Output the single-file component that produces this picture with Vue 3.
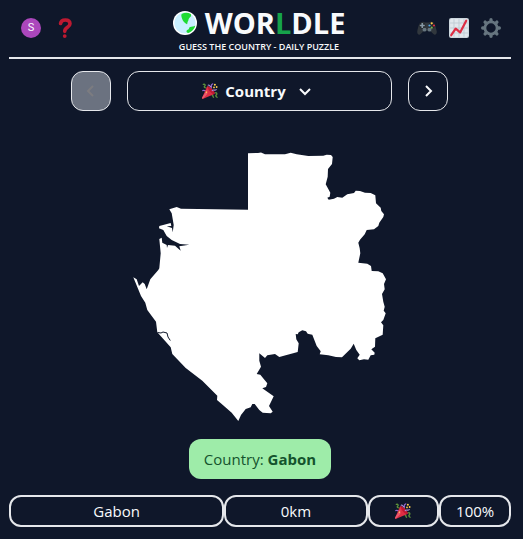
<script setup>
import { ref } from 'vue'

const guess = ref({ name: 'Gabon', distance: '0km', percent: '100%' })
</script>

<template>
  <svg class="defs" aria-hidden="true">
    <symbol id="party" viewBox="0 0 36 36">
      <path fill="none" stroke="#9266cc" stroke-width="3" stroke-linecap="round" d="M19 13c4-3 1-6 2-8s2-2 3-3M2 17c3-2 5 2 8 0" />
      <path fill="none" stroke="#5c913b" stroke-width="3" stroke-linecap="round" d="M3 3c4-1 5 2 3 4s0 4 3 4M30 22c4-1 4 3 2 5s0 4 2 5M23 27c2 0 1 4 3 5" />
      <path fill="#dd2e44" d="M11.600 7.600c-.2.100-.3.300-.4.600L.2 33c-.7 1.700.2 3.100 2.500 2.600L28 24.500c1-.5.800-2.800-.8-5.500-3.700-6.200-12.500-13.500-15.600-11.400z" />
      <path fill="#ea596e" d="M12 14 .7 31.800.2 33c-.4 1.300.2 2.600 1.800 2.700L12 25z" />
      <path fill="#be1931" d="M21 13c5 4 8 9 7 11.500-1 1.400-6-1.500-9.500-5S12 9 13.500 8.200C15 7.500 18 10 21 13z" />
      <path fill="none" stroke="#aa8dd8" stroke-width="2.500" stroke-linecap="round" d="M14 5c3-2 3 4 6 3M23 17c3-3 6 1 9-2" />
      <g fill="#ffcc4d">
        <circle cx="29" cy="4" r="2.200" /><circle cx="33" cy="9" r="2" />
        <circle cx="27" cy="10" r="2" /><circle cx="10" cy="21" r="1.700" />
      </g>
    </symbol>
  </svg>

  <div class="page">
    <header class="header">
      <nav class="tools left">
        <button class="avatar" type="button" aria-label="Account">S</button>
        <button class="tool" type="button" aria-label="How to play">
          <svg viewBox="0 0 36 36">
            <path fill="none" stroke="#be1931" stroke-width="6.500" stroke-linecap="round" d="M10 10c.5-4 4-6.500 8.500-6.500 5.500 0 8.500 3 8.500 7 0 6.500-9.500 6-9.500 13.500" />
            <circle cx="17.500" cy="32.500" r="3.400" fill="#be1931" />
          </svg>
        </button>
      </nav>

      <div class="brand">
        <h1 class="title">
          <svg class="globe" viewBox="0 0 24 24" aria-hidden="true">
            <circle cx="12" cy="12" r="12" fill="#fff" />
            <circle cx="12" cy="12" r="10.600" fill="#c9efff" />
            <path fill="#1edb32" d="M8.600 3C12 1.300 15 1.500 17.800 3.100c1 2.400-.8 3.200-1.800 4.400-.8 1-.3 2-1.200 2.900-.6.800-.2 2.200-.8 2.800-2.100-1-4.300-3-4.800-5.200-.3-1.400-1.400-3-.6-5z" />
            <path fill="#1edb32" d="M22.300 14.500c-.7 3.300-3.500 6.400-7 7.600-1.200-.6-2-1.300-1.800-2.200.3-1.200 1.900-1.100 2.400-2.200.4-1 .2-1.500 1.300-1.800 1.600-.3 3.500-.3 5.100-1.400z" />
          </svg>
          <span>WOR<span class="accent">L</span>DLE</span>
        </h1>
        <p class="subtitle">GUESS THE COUNTRY - DAILY PUZZLE</p>
      </div>

      <nav class="tools right">
        <button class="tool" type="button" aria-label="Other games">
          <svg viewBox="0 0 36 36">
            <path fill="#31373d" d="M7 8c2-2 6-1 7 0h8c1-1 5-2 7 0 3 1 5 8 6.500 16 .8 5-3 8-6 5l-6-6H12.500l-6 6c-3 3-6.800 0-6-5C2 16 4 9 7 8z" />
            <circle cx="9.500" cy="13.500" r="5.500" fill="#202428" /><circle cx="26.500" cy="13.500" r="5.500" fill="#202428" />
            <path fill="#8899a6" d="M8 9h3v3h3v3h-3v3H8v-3H5v-3h3z" />
            <circle cx="13.500" cy="21" r="3.500" fill="#66757f" /><circle cx="22.500" cy="21" r="3.500" fill="#66757f" />
            <circle cx="26.500" cy="9.500" r="2" fill="#ffcc4d" /><circle cx="30.500" cy="13.500" r="2" fill="#dd2e44" />
            <circle cx="22.500" cy="13.500" r="2" fill="#55acee" /><circle cx="26.500" cy="17.500" r="2" fill="#77b255" />
          </svg>
        </button>
        <button class="tool" type="button" aria-label="Statistics">
          <svg viewBox="0 0 36 36">
            <rect width="36" height="36" rx="4" fill="#ccd6dd" />
            <rect x="2" y="2" width="32" height="32" rx="2" fill="#e1e8ed" />
            <path fill="none" stroke="#bdcad3" stroke-width="1.500" d="M2 9h32M2 18h32M2 27h32M9 2v32M18 2v32M27 2v32" />
            <path fill="none" stroke="#dd2e44" stroke-width="4" stroke-linecap="round" stroke-linejoin="round" d="m4 31 8-12 8 7L31 5" />
          </svg>
        </button>
        <button class="tool" type="button" aria-label="Settings">
          <svg viewBox="0 0 36 36">
            <circle cx="18" cy="18" r="11" fill="none" stroke="#66757f" stroke-width="5" />
            <g stroke="#66757f" stroke-width="6" stroke-linecap="round">
              <path d="M18 3v3M18 30v3M3 18h3M30 18h3M7.400 7.400l2 2M26.600 26.600l2 2M28.600 7.400l-2 2M9.400 26.600l-2 2" />
            </g>
          </svg>
        </button>
      </nav>
    </header>

    <main class="main">
      <div class="rounds">
        <button class="step" type="button" disabled aria-label="Previous round">
          <svg viewBox="0 0 16 16"><path d="M10 3 5 8l5 5" /></svg>
        </button>
        <button class="picker" type="button">
          <svg class="party"><use href="#party" /></svg>
          <span>Country</span>
          <svg class="chevron" viewBox="0 0 16 16"><path d="m3 6 5 5 5-5" /></svg>
        </button>
        <button class="step" type="button" aria-label="Next round">
          <svg viewBox="0 0 16 16"><path d="m6 3 5 5-5 5" /></svg>
        </button>
      </div>

      <svg class="map" viewBox="133 152 254 270" role="img" aria-label="Country outline">
        <path
          fill="#fff"
          d="M248 153.300 258 153 261 152.600 265 154.300 285 154.300 290.700 152.700 296.700 154.300 308.300 156 323.300 155.700 326.700 154.700 331 155 332.700 157 332 164 328 169 327.700 176.700 325.700 184.300 328.300 189 330.300 192.700 329.700 196.700 327.300 197.700 328.700 199.700 334 198.700 337.300 197 342.300 197.700 347.300 194.300 354 193 355.700 190.700 360 191 365 192.700 370.700 193 375.300 195.300 376 203.300 380.700 207.700 381.300 211 384 214.300 383.300 217 379.300 222.700 378.300 226 374 229.300 366.700 230 364.700 234.300 360 239.700 358.300 242.700 359.700 248.300 360.300 253.300 358.300 262.700 367.300 263.700 371 266 371.700 271 378.300 271.300 382.700 273.300 386 279.300 384 284 384.700 289.300 382 294 383.300 301.700 384.700 306.700 383.700 310.700 385.700 313.300 383.300 320 381 322.300 383.300 325.300 382.700 334.700 375.300 338.300 375 346.700 371.300 349.300 374.700 352.700 374.300 354.700 370.700 355.300 368.300 359.700 364 359.300 359.300 360.300 357.300 358.300 359.700 354.700 356.300 350 353.700 343.700 350.700 348.700 342 357.300 336 357 328.300 355.300 319.700 354.300 320.700 351.300 316.700 346 312.300 334.700 307.700 333.700 306 331.300 302.300 330.300 298.700 332.300 297.700 334.300 295.700 334 296.300 339.300 298.700 343.300 297.700 352 279.300 357 275 354 267.300 355.300 265 358 259.300 353.300 259.300 360.700 261 366.700 256.700 374 260.300 374.700 267.300 383.300 266 387 262.300 388.300 273.700 396.300 269 406 272.700 411.700 270.700 413.300 262.700 412.700 259.300 410 254.700 404 252.300 404 250.700 407.300 245.700 409 241 415 238.300 421 231.700 412.700 221.700 404 217 400 217.300 395.700 202.300 380.700 185.700 368 172.300 354 170.700 347.300 157.300 332.300 156 321.700 147.300 310 145.300 302.700 141 296 133.300 277.300 136.700 279.300 139 286 142.700 282.300 144.700 284 146.700 289.300 150.300 279.300 158.300 270 159.300 268.300 160.700 253.300 159.300 239 161.700 237.700 162.300 242.700 166.700 245 167 248 168 245 175 245.700 180.700 250.700 179.300 246.300 189.300 244.700 180 244 171.700 240 166.700 236 163.300 230 159 228.300 159.300 226 170.700 223 171.300 226 166.700 226.300 172 228 172.700 232.300 173.700 225 171.700 213.300 169.300 209.300 176.700 207 181 208.700 248 209.700Z"
        />
        <path class="lagoon" d="M157.500 332.500 161 333 163 332 167 333 168 337 170.300 340.500" />
      </svg>

      <p class="answer">Country: <strong>Gabon</strong></p>

      <div class="guess">
        <div class="cell">{{ guess.name }}</div>
        <div class="cell">{{ guess.distance }}</div>
        <div class="cell"><svg class="party" role="img" aria-label="Correct"><use href="#party" /></svg></div>
        <div class="cell">{{ guess.percent }}</div>
      </div>
    </main>
  </div>
</template>

<style>
body {
  margin: 0;
  background: #0f172a;
}
</style>

<style scoped>
.defs {
  display: block;
  width: 0;
  height: 0;
}

.page {
  min-height: 100vh;
  box-sizing: border-box;
  padding: 0 12px 12px 9px;
  background: #0f172a;
  color: #f8fafc;
  font: 15px/24px "Open Sans", "Noto Sans", sans-serif;
}

button {
  margin: 0;
  padding: 0;
  border: 0;
  background: none;
  color: inherit;
  font: inherit;
  cursor: pointer;
}

svg {
  display: block;
}

.header {
  display: grid;
  grid-template-columns: 1fr auto 1fr;
  align-items: center;
  height: 57px;
  border-bottom: 2px solid #e5e7eb;
}

.tools {
  display: flex;
  align-items: center;
  padding-bottom: 1px;
}

.left {
  gap: 14px;
  padding-left: 12px;
}

.right {
  justify-content: flex-end;
  gap: 12px;
  padding-right: 10px;
}

.tool,
.tool svg,
.avatar {
  width: 20px;
  height: 20px;
}

.avatar {
  border-radius: 50%;
  background: #ab47bc;
  font: 11px/20px Roboto, sans-serif;
  text-align: center;
}

.brand {
  display: flex;
  flex-direction: column;
  align-items: center;
  padding: 3px 2px 0 0;
}

.title {
  display: flex;
  align-items: center;
  gap: 8px;
  margin: 0;
  font-size: 29px;
  line-height: 34px;
  font-weight: 700;
}

.globe {
  width: 24px;
  height: 24px;
}

.accent {
  color: #16a34a;
}

.subtitle {
  margin: 0;
  font-size: 9px;
  line-height: 14px;
  font-weight: 600;
}

.main {
  display: flex;
  flex-direction: column;
  align-items: center;
}

.rounds {
  display: flex;
  gap: 16px;
  width: 75%;
  margin: 12px 1px 0 0;
}

.step,
.picker {
  display: flex;
  align-items: center;
  justify-content: center;
  box-sizing: border-box;
  height: 40px;
  border: 1px solid #e5e7eb;
  border-radius: 12px;
}

.step {
  flex: 0 0 40px;
}

.step:disabled {
  background: #6b7280;
  color: #7c7c80;
  cursor: default;
}

.picker {
  flex: 1;
  gap: 7px;
  padding-right: 4px;
  font-weight: 700;
}

.step svg,
.chevron {
  width: 16px;
  height: 16px;
  fill: none;
  stroke: currentColor;
  stroke-width: 2;
}

.chevron {
  margin-left: 4px;
}

.party {
  width: 16px;
  height: 16px;
}

.map {
  width: calc(50% + 3px);
  margin-top: 41px;
}

.lagoon {
  fill: none;
  stroke: #0f172a;
  stroke-width: 1;
}

.answer {
  margin: 17px 0 16px;
  padding: 8px 15px;
  border-radius: 12px;
  background: #9eeca9;
  color: #14532d;
}

.guess {
  display: grid;
  grid-template-columns: 3fr 2fr 1fr 1fr;
  width: 100%;
}

.cell {
  display: flex;
  align-items: center;
  justify-content: center;
  box-sizing: border-box;
  height: 32px;
  border: 2px solid #e5e7eb;
  border-radius: 12px;
}
</style>
